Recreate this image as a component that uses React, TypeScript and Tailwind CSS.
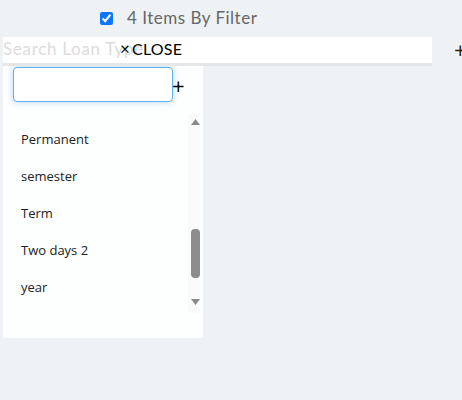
import { useState } from 'react';

const loanTypes = ['Permanent', 'semester', 'Term', 'Two days 2', 'year'];

function ScrollTrack() {
  return (
    <div className="flex w-[12px] flex-col items-center bg-[#fafafa] pt-[5px] pb-[7px]">
      <svg width="9" height="6" viewBox="0 0 9 6" className="ml-[2px]">
        <path d="M4.5 0 L9 6 L0 6 Z" fill="#8a8a8a" />
      </svg>
      <div className="h-[104px]" />
      <div className="ml-[3px] h-[49px] w-[9px] rounded-[4px] bg-[#8c8c8c]" />
      <div className="h-[21px]" />
      <svg width="9" height="6" viewBox="0 0 9 6" className="ml-[2px]">
        <path d="M0 0 L9 0 L4.5 6 Z" fill="#8a8a8a" />
      </svg>
    </div>
  );
}

export default function App() {
  const [checked, setChecked] = useState(true);
  const [query, setQuery] = useState('');

  return (
    <div className="min-h-[400px] w-full overflow-hidden bg-[#eff2f5] font-['Open_Sans',sans-serif]">
      {/* Filter header */}
      <div className="flex h-[37px] items-center pl-[100px] pb-[1px]">
        <input
          type="checkbox"
          checked={checked}
          onChange={() => setChecked(!checked)}
          className="h-[13px] w-[13px] accent-[#0b75ff]"
        />
        <span className="ml-[14px] font-['Lato',sans-serif] text-[17px] tracking-[0.5px] text-[#666666]">
          4 Items By Filter
        </span>
      </div>

      {/* Search bar */}
      <div className="flex items-start">
        <div className="relative ml-[3px] h-[29px] w-[429px] shrink-0 border-b-[3px] border-[#e4e6e8] bg-white">
          <input
            placeholder="Search Loan Type"
            className="h-[24px] w-full bg-transparent font-['Lato',sans-serif] text-[17px] tracking-[0.7px] text-[#333] outline-none placeholder:text-[#dcdcdc]"
          />
          <button className="absolute left-[117px] top-[2px] flex items-center font-['Lato',sans-serif] text-[16px] leading-[20px] tracking-[0.2px] text-black">
            <span className="mr-[2px] text-[17px]">×</span>CLOSE
          </button>
        </div>
        <span className="ml-[22px] mt-[-1px] shrink-0 text-[22px] leading-[26px] text-[#2e2010]">+</span>
      </div>

      {/* Dropdown panel */}
      <div className="ml-[3px] mt-[-1px] flex h-[273px] w-[200px] flex-col bg-[#fdfefe]">
        <div className="flex items-center pl-[10px] pt-[2px]">
          <input
            value={query}
            onChange={(e) => setQuery(e.target.value)}
            className="h-[35px] w-[160px] rounded-[4px] border border-[#66afe9] bg-white px-2 text-[13px] shadow-[0_0_6px_rgba(102,175,233,0.5)] outline-none"
          />
          <span className="ml-[-1px] text-[22px] leading-none text-black">+</span>
        </div>
        <div className="mt-[12px] flex h-[199px]">
          <ul className="flex-1 pt-[7px]">
            {loanTypes.map((t) => (
              <li key={t} className="flex h-[37px] items-center pl-[18px] text-[13px] text-[#222222]">
                {t}
              </li>
            ))}
          </ul>
          <ScrollTrack />
          <div className="w-[3px]" />
        </div>
      </div>
    </div>
  );
}
